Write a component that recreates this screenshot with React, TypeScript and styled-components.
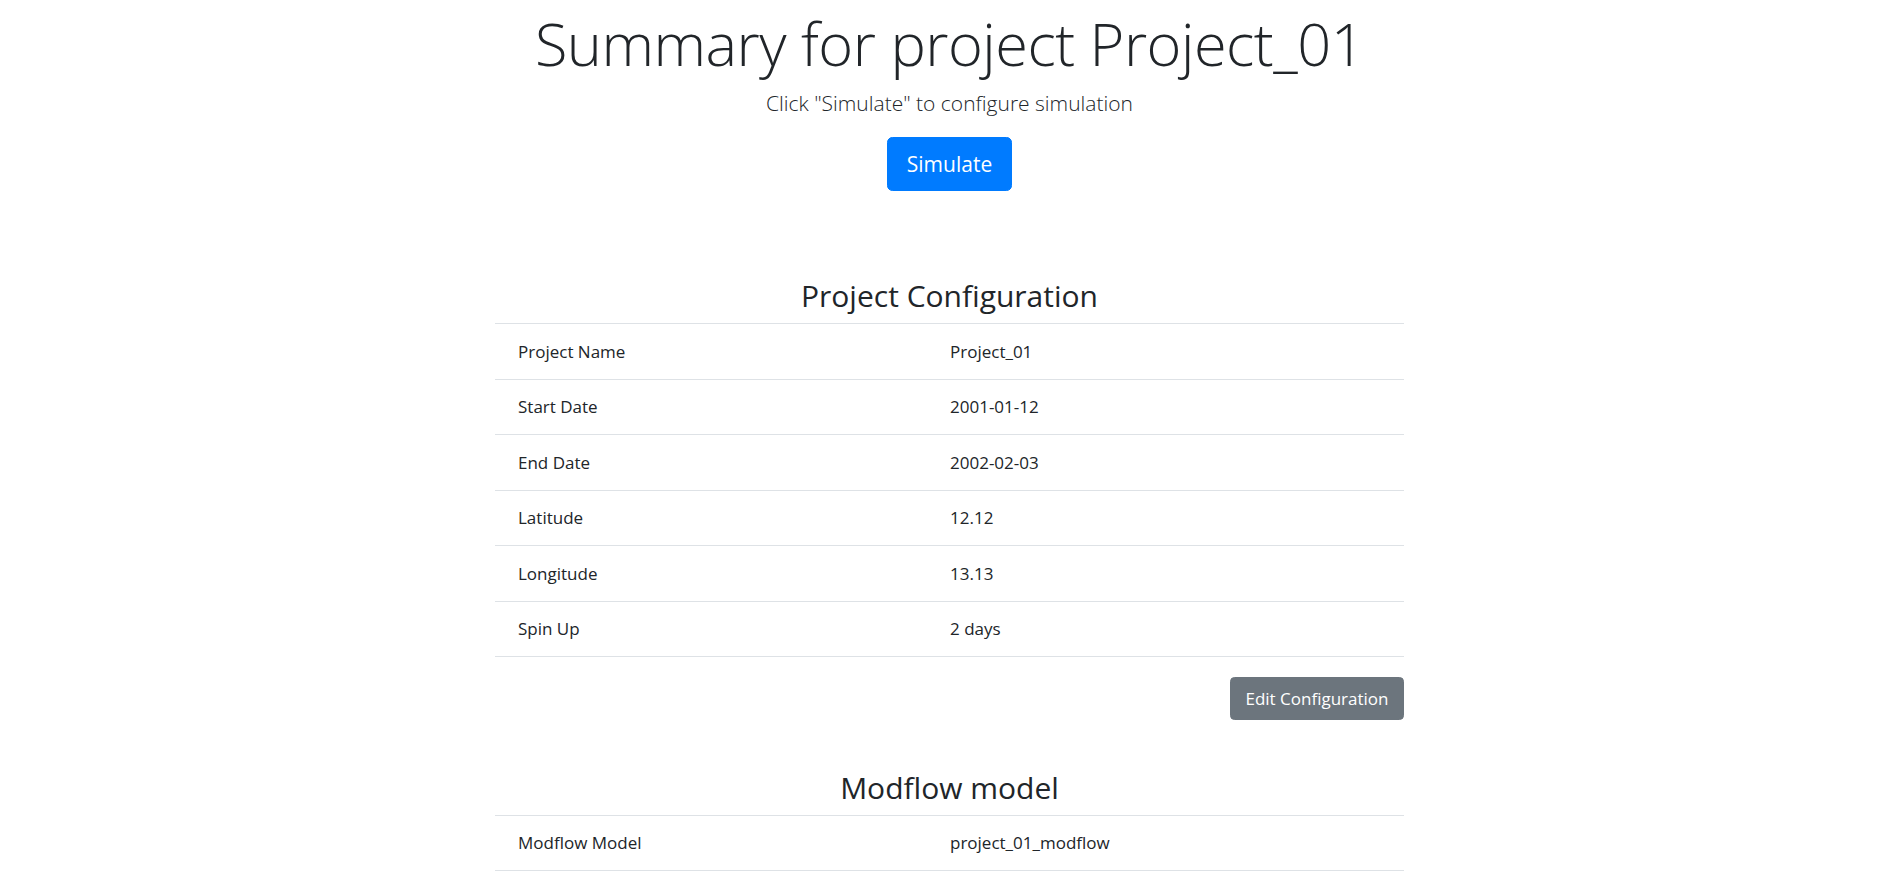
import styled, { createGlobalStyle } from 'styled-components';

const GlobalStyle = createGlobalStyle`
  body {
    margin: 0;
    background: #fff;
    color: #212529;
    font-family: "Open Sans", "Noto Sans", sans-serif;
  }
`;

const Page = styled.main`
  display: flex;
  flex-direction: column;
  align-items: center;
  padding: 5px 0 40px 14px;
`;

const Title = styled.h1`
  margin: 0;
  font-size: 59.5px;
  font-weight: 300;
  line-height: 76px;
  letter-spacing: -0.5px;
`;

const Lead = styled.p`
  margin: 5px 0 17px;
  font-size: 21px;
  font-weight: 300;
  line-height: 34px;
`;

const Button = styled.button<{ $variant?: 'primary' | 'secondary'; $large?: boolean }>`
  font-family: inherit;
  color: #fff;
  background: ${(p) => (p.$variant === 'secondary' ? '#6c757d' : '#007bff')};
  border: 1px solid ${(p) => (p.$variant === 'secondary' ? '#6c757d' : '#007bff')};
  border-radius: ${(p) => (p.$large ? '5.4px' : '4.5px')};
  font-size: ${(p) => (p.$large ? '21px' : '17px')};
  line-height: ${(p) => (p.$large ? '34px' : '27px')};
  padding: ${(p) => (p.$large ? '9px 19px' : '6.75px 14.5px')};
  cursor: pointer;
`;

const Section = styled.section<{ $gap: number }>`
  width: 909px;
  margin-top: ${(p) => p.$gap}px;
  display: flex;
  flex-direction: column;
`;

const Heading = styled.h2`
  margin: 0 0 7px;
  padding-top: 4px;
  text-align: center;
  font-size: 30px;
  font-weight: 400;
  line-height: 41px;
`;

const Table = styled.div`
  border-bottom: 1px solid #dee2e6;
`;

const Row = styled.div`
  display: grid;
  grid-template-columns: 434px 1fr;
  border-top: 1px solid #dee2e6;
`;

const Cell = styled.div<{ $first?: boolean }>`
  padding: 13.75px 21px 13.75px ${(p) => (p.$first ? '23px' : '21px')};
  font-size: 17px;
  line-height: 27px;
`;

const Actions = styled.div`
  display: flex;
  justify-content: flex-end;
  margin-top: 20px;
`;

const config: [string, string][] = [
  ['Project Name', 'Project_01'],
  ['Start Date', '2001-01-12'],
  ['End Date', '2002-02-03'],
  ['Latitude', '12.12'],
  ['Longitude', '13.13'],
  ['Spin Up', '2 days'],
];

const modflow: [string, string][] = [['Modflow Model', 'project_01_modflow']];

const KeyValueTable = ({ rows }: { rows: [string, string][] }) => (
  <Table>
    {rows.map(([k, v]) => (
      <Row key={k}>
        <Cell $first>{k}</Cell>
        <Cell>{v}</Cell>
      </Row>
    ))}
  </Table>
);

const App = () => (
  <>
    <GlobalStyle />
    <Page>
      <Title>Summary for project Project_01</Title>
      <Lead>Click "Simulate" to configure simulation</Lead>
      <Button $large>Simulate</Button>

      <Section $gap={80}>
        <Heading>Project Configuration</Heading>
        <KeyValueTable rows={config} />
        <Actions>
          <Button $variant="secondary">Edit Configuration</Button>
        </Actions>
      </Section>

      <Section $gap={43}>
        <Heading>Modflow model</Heading>
        <KeyValueTable rows={modflow} />
      </Section>
    </Page>
  </>
);

export default App;
